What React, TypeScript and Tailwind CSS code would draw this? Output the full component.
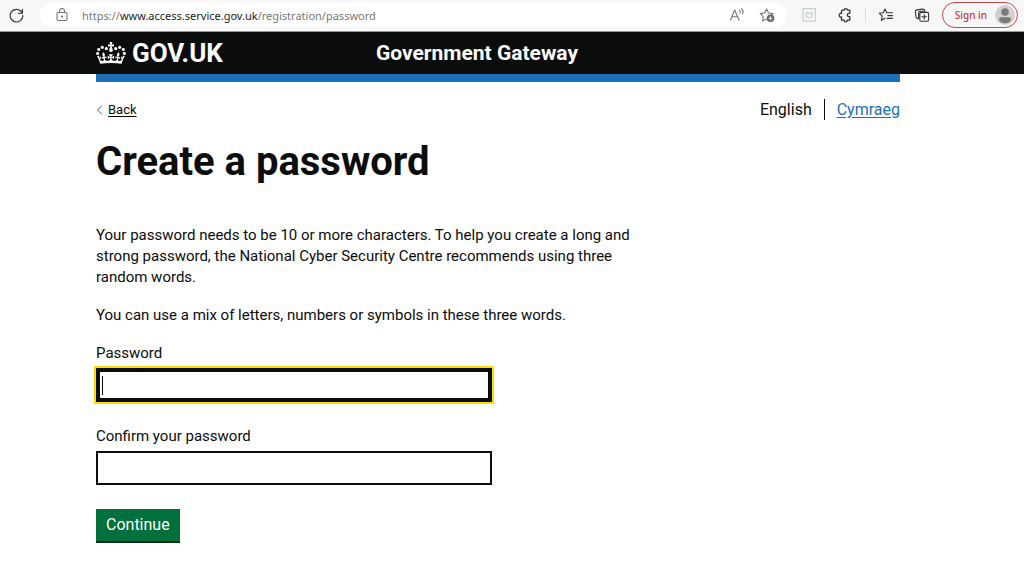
import type { ReactNode } from 'react'

const CROWN =
  'M25 30.2c3.5 1.5 7.7-.2 9.1-3.7 1.5-3.6-.2-7.8-3.9-9.2-3.6-1.4-7.6.3-9.1 3.9-1.4 3.5.3 7.5 3.9 9zM9 39.5c3.6 1.5 7.8-.2 9.2-3.7 1.5-3.6-.2-7.8-3.9-9.1-3.6-1.5-7.6.2-9.1 3.8-1.4 3.5.3 7.5 3.8 9zM4.4 57.2c3.5 1.5 7.7-.2 9.1-3.8 1.5-3.6-.2-7.7-3.9-9.1-3.5-1.5-7.6.3-9.1 3.8-1.4 3.5.3 7.6 3.9 9.1zm38.3-21.4c3.5 1.5 7.7-.2 9.1-3.8 1.5-3.6-.2-7.7-3.9-9.1-3.6-1.5-7.6.3-9.1 3.8-1.3 3.6.4 7.7 3.9 9.1zm64.4-5.6c-3.6 1.5-7.8-.2-9.1-3.7-1.5-3.6.2-7.8 3.8-9.2 3.6-1.4 7.7.3 9.2 3.9 1.3 3.5-.4 7.5-3.9 9zm15.9 9.3c-3.6 1.5-7.7-.2-9.1-3.7-1.5-3.6.2-7.8 3.7-9.1 3.6-1.5 7.7.2 9.2 3.8 1.5 3.5-.3 7.5-3.8 9zm4.7 17.7c-3.6 1.5-7.8-.2-9.2-3.8-1.5-3.6.2-7.7 3.9-9.1 3.6-1.5 7.7.3 9.2 3.8 1.3 3.5-.4 7.6-3.9 9.1zM89.3 35.8c-3.6 1.5-7.8-.2-9.2-3.8-1.4-3.6.2-7.7 3.9-9.1 3.6-1.5 7.7.3 9.2 3.8 1.4 3.6-.3 7.7-3.9 9.1zM69.7 17.7l8.9 4.7V9.3l-8.9 2.8c-.2-.3-.5-.6-.9-.9L72.4 0H59.6l3.5 11.2c-.3.3-.6.5-.9.9l-8.8-2.8v13.1l8.8-4.7c.3.3.6.7.9.9l-5 15.4v.1c-.2.8-.4 1.6-.4 2.4 0 4.1 3.1 7.5 7 8.1h.2c.3 0 .7.1 1 .1.4 0 .7 0 1-.1h.2c4-.6 7.1-4.1 7.1-8.1 0-.8-.1-1.7-.4-2.4V34l-5.1-15.4c.4-.2.7-.6 1-.9zM66 92.8c16.9 0 32.8 1.1 47.1 3.2 4-16.9 8.9-26.7 14-33.5l-9.6-3.4c1 4.9 1.1 7.2 0 10.2-1.5-1.4-3-4.3-4.2-8.7L108.6 76c2.8-2 5-3.2 7.5-3.3-4.4 9.4-10 11.9-13.6 11.2-4.3-.8-6.3-4.6-5.6-7.9 1-4.7 5.7-5.9 8-.5 4.3-8.7-3-11.4-7.6-8.8 7.1-7.2 7.9-13.5 2.1-21.1-8 6.1-8.1 12.3-4.5 20.8-4.7-5.4-12.1-2.5-9.5 6.2 3.4-5.2 7.9-2 7.2 3.1-.6 4.3-6.4 7.8-13.5 7.2-10.3-.9-10.9-8-11.2-13.8 2.5-.5 7.1 1.8 11 7.3L80.2 60c-4.1 4.4-8 5.3-12.3 5.4 1.4-4.4 8-11.6 8-11.6H55.5s6.4 7.2 7.9 11.6c-4.2-.1-8-1-12.3-5.4l1.4 16.4c3.9-5.5 8.5-7.7 10.9-7.3-.3 5.8-.9 12.8-11.1 13.8-7.2.6-12.9-2.9-13.5-7.2-.7-5 3.8-8.3 7.1-3.1 2.7-8.7-4.6-11.6-9.4-6.2 3.7-8.5 3.6-14.7-4.6-20.8-5.8 7.6-5 13.9 2.2 21.1-4.7-2.6-11.9.1-7.7 8.8 2.3-5.5 7.1-4.2 8.1.5.7 3.3-1.3 7.1-5.7 7.9-3.5.7-9-1.8-13.5-11.2 2.5.1 4.7 1.3 7.5 3.3l-4.7-15.4c-1.2 4.4-2.7 7.2-4.3 8.7-1.1-3-.9-5.3 0-10.2l-9.5 3.4c5 6.9 9.9 16.7 14 33.5 14.8-2.1 30.8-3.2 47.7-3.2z'

function ToolIcon({ label, className, children }: { label: string; className: string; children: ReactNode }) {
  return (
    <button type="button" aria-label={label} className={`shrink-0 ${className}`}>
      <svg
        viewBox="0 0 16 16"
        className="block size-4"
        fill="none"
        stroke="currentColor"
        strokeWidth="1.1"
        strokeLinecap="round"
        strokeLinejoin="round"
      >
        {children}
      </svg>
    </button>
  )
}

function BrowserBar() {
  return (
    <div className="flex h-8 items-center border-b border-[#9a9a9a] bg-[#f7f7f7] pr-1.5 pb-px pl-2 font-['Noto_Sans',sans-serif]">
      <ToolIcon label="Refresh" className="text-[#333]">
        <path d="M14.3 6.2A6.3 6.3 0 1 0 14.8 8.6M14.4 2.2v4.1h-4.1" />
      </ToolIcon>

      <div className="ml-4 flex h-6 flex-1 items-center rounded-full bg-white pr-3 pl-3.5">
        <ToolIcon label="Site information" className="text-[#777]">
          <rect x="3" y="5.5" width="10" height="8" rx="1.2" />
          <path d="M5.5 5.5V4a2.5 2.5 0 0 1 5 0v1.5" />
          <circle cx="8" cy="9.5" r=".5" fill="currentColor" />
        </ToolIcon>
        <p className="ml-3 flex-1 text-[11px] whitespace-nowrap text-[#777]">
          https://<span className="text-[#1b1b1b]">www.access.service.gov.uk</span>/registration/password
        </p>
        <div className="flex gap-3.5">
          <ToolIcon label="Read aloud" className="text-[#777]">
            <path d="M1.5 13 5.7 3 10 13M3 9.7h5.5M10.5 3.2c.8.7 1 1.8.7 3M12.6 1.6c1.4 1.4 1.8 3.2 1.2 5.3" />
          </ToolIcon>
          <ToolIcon label="Add to favourites" className="text-[#777]">
            <path d="M7.2 12.2 3.6 14l.7-4.3L1.2 6.6l4.3-.6L7.6 2l2 4 4.4.6-1.2 1.2" />
            <circle cx="11.5" cy="11.3" r="3.8" fill="#666" stroke="none" />
            <path d="M11.5 9.6v3.4M9.8 11.3h3.4" stroke="#fff" strokeWidth=".9" />
          </ToolIcon>
        </div>
      </div>

      <ToolIcon label="Shield extension" className="ml-3.5 text-[#c9ced1]">
        <rect x="2" y="1.7" width="12.4" height="12.4" strokeWidth="1.2" />
        <path d="M5.4 5.300v4.400l2.800 1.300 2.800-1.300V5.300L8.200 6.500z" strokeWidth="1.3" />
      </ToolIcon>
      <ToolIcon label="Extensions" className="ml-5 text-[#333]">
        <path
          strokeWidth="1.3"
          d="M5.2 3.2h2a1.6 1.6 0 0 1 3.2 0h2.400v3a1.800 1.800 0 1 0 0 3.400v3.600h-2.500a1.600 1.600 0 0 1-3.200 0H4.500V10a1.900 1.900 0 1 1 0-3.700V3.900z"
        />
      </ToolIcon>
      <span className="ml-3 h-3.5 w-px bg-[#dcdcdc]" />
      <ToolIcon label="Favourites" className="ml-3 text-[#333]">
        <path d="M7 11.2 3.4 13.4l.8-4.3L1.2 6.2l4-.5L7 2l1.8 3.7h5.6M9.8 8.6h4.6M9.2 11.4h5.2" />
      </ToolIcon>
      <ToolIcon label="Collections" className="ml-5 text-[#333]">
        <path d="M4 11.6c-1.3-.1-1.8-.8-2-2L1.4 5c-.1-1.2.4-1.9 1.6-2.1l5.5-.8c1.2-.1 2 .3 2.3 1.5M4.6 11.2V5.8c0-1.1.5-1.6 1.6-1.6H11" />
        <rect x="5.8" y="5.4" width="8.8" height="8.8" rx="1.4" />
        <path d="M10.2 7.5v4.6M7.9 9.8h4.6" />
      </ToolIcon>
      <button
        type="button"
        className="ml-3 flex h-[26px] shrink-0 items-center gap-2 rounded-full border border-[#c9484b] pr-0.5 pl-3 text-[10px] font-medium text-[#c23a3f]"
      >
        Sign in
        <svg viewBox="0 0 20 20" className="size-5">
          <circle cx="10" cy="10" r="10" fill="#d2d0ce" />
          <circle cx="10" cy="7" r="3.8" fill="#7d7b79" />
          <path d="M4 14.2c0-1.3.8-2 2-2h8c1.2 0 2 .7 2 2 0 2.2-2.7 4-6 4s-6-1.8-6-4z" fill="#7d7b79" />
        </svg>
      </button>
    </div>
  )
}

function Header() {
  return (
    <header>
      <div className="flex h-[42px] items-center bg-[#0b0c0c] pr-31 pl-24 text-white">
        <a href="#" className="flex w-[280px] items-center gap-1.5 text-[26px] font-bold">
          <svg viewBox="0 0 132 97" className="h-[22px] w-[30px]" fill="currentColor" aria-hidden="true">
            <path fillRule="evenodd" d={CROWN} />
          </svg>
          GOV.UK
        </a>
        <a href="#" className="text-[21px] font-bold">
          Government Gateway
        </a>
      </div>
      <div className="mr-31 ml-24 h-2 bg-[#1d70b8]" />
    </header>
  )
}

export default function App() {
  return (
    <div className="min-h-screen bg-white font-[Roboto,sans-serif] text-[15px] leading-[21px] text-[#0b0c0c]">
      <BrowserBar />
      <Header />

      <main className="pr-31 pb-8 pl-24">
        <div className="flex items-center justify-between pt-[17px]">
          <a href="#" className="flex items-center gap-1 text-[13px]">
            <svg viewBox="0 0 8 12" className="h-3 w-2" fill="none" stroke="#505a5f" aria-hidden="true">
              <path d="M6 1.5 1.5 6 6 10.5" />
            </svg>
            <span className="underline underline-offset-2">Back</span>
          </a>
          <nav aria-label="Language" className="flex items-center text-base leading-[21px]">
            <span className="border-r border-[#0b0c0c] pr-3">English</span>
            <a href="#" className="pl-3 text-[#1d70b8] underline underline-offset-2">
              Cymraeg
            </a>
          </nav>
        </div>

        <h1 className="mt-[17px] text-[40px] leading-[50px] font-bold">Create a password</h1>

        <p className="mt-[38px] max-w-[536px]">
          Your password needs to be 10 or more characters. To help you create a long and strong password, the National
          Cyber Security Centre recommends using three random words.
        </p>
        <p className="mt-[17px]">You can use a mix of letters, numbers or symbols in these three words.</p>

        <form className="mt-[17px] max-w-[396px]">
          <label htmlFor="password" className="block">
            Password
          </label>
          <div className="relative mt-1">
            <input
              id="password"
              type="password"
              className="block h-[34px] w-full border-4 border-[#0b0c0c] px-1 outline-2 outline-[#ffdd00]"
            />
            {/* text cursor */}
            <span className="absolute top-2 left-1.5 h-[19px] w-px bg-[#0b0c0c]" />
          </div>

          <label htmlFor="confirm" className="mt-6 block">
            Confirm your password
          </label>
          <input id="confirm" type="password" className="mt-1 block h-[34px] w-full border-2 border-[#0b0c0c] px-1" />

          <button type="button" className="mt-6 h-8 bg-[#00703c] px-2.5 text-base text-white shadow-[0_2px_0_#002d18]">
            Continue
          </button>
        </form>
      </main>
    </div>
  )
}
